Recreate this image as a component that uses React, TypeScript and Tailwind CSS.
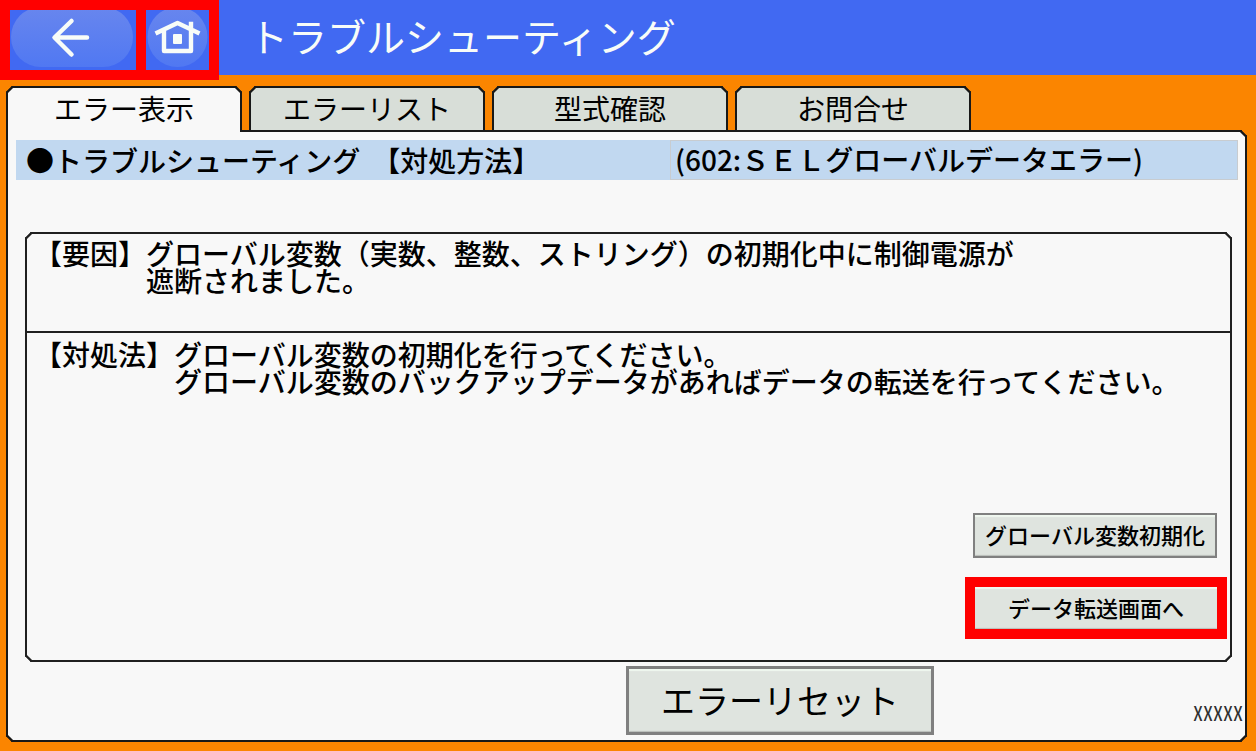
import React from 'react';
import clsx from 'clsx';

interface Tab {
  id: string;
  label: string;
}

const tabs: Tab[] = [
  { id: 'error', label: 'エラー表示' },
  { id: 'list', label: 'エラーリスト' },
  { id: 'model', label: '型式確認' },
  { id: 'contact', label: 'お問合せ' },
];

const Header: React.FC = () => (
  <header className="flex h-[75px] items-start bg-[#4169f2] text-[#f8fcf8]">
    <div className="z-10 flex h-20 shrink-0 bg-[#4169f2]">
      <button type="button" aria-label="戻る" className="w-[146px] border-10 border-[#ff0000]">
        <svg viewBox="0 0 126 60" className="block h-full w-full" fill="none">
          <defs>
            <linearGradient id="shine" x1="0" y1="0" x2="0" y2="1">
              <stop offset="0" stopColor="#6886ee" />
              <stop offset="1" stopColor="#5078f2" />
            </linearGradient>
          </defs>
          <rect x="1" y="-3" width="122" height="60" rx="30" fill="url(#shine)" />
          <path
            d="M77 27.5H45M61.5 11L44.5 27.5L61.5 44.5"
            stroke="currentColor"
            strokeWidth="4.5"
            strokeLinecap="round"
            strokeLinejoin="round"
          />
        </svg>
      </button>
      <button type="button" aria-label="ホーム" className="-ml-2.5 w-[83px] border-10 border-[#ff0000]">
        <svg viewBox="0 0 63 60" className="block h-full w-full" fill="none">
          <circle cx="31.5" cy="27" r="30" fill="url(#shine)" />
          <path
            d="M11.5 22.5L31.5 13L51.5 22.5M45 14V19M18 22V41H45V22"
            stroke="currentColor"
            strokeWidth="4.4"
            strokeLinecap="square"
            strokeLinejoin="round"
          />
          <rect x="27" y="24" width="9" height="10" rx="1" fill="currentColor" />
        </svg>
      </button>
    </div>
    <h1 className="ml-[30px] text-[39px] leading-[70px] whitespace-nowrap">トラブルシューティング</h1>
  </header>
);

interface PanelButtonProps {
  children: React.ReactNode;
  className?: string;
}

const PanelButton: React.FC<PanelButtonProps> = ({ children, className }) => (
  <button
    type="button"
    className={clsx(
      'border-[#808080] bg-[#dfe4df] pb-0.5 text-black shadow-[inset_0_2px_1px_#f0f8f0,inset_0_-1px_1px_#b8bcb8]',
      className
    )}
  >
    {children}
  </button>
);

const App: React.FC = () => {
  const [active, setActive] = React.useState('error');

  return (
    <div
      lang="ja"
      className="flex min-h-screen flex-col bg-[#fb8500] font-['Noto_Sans_CJK_JP',sans-serif] text-black"
    >
      <Header />

      <main className="flex flex-1 flex-col pt-[11px] pr-[9px] pb-[9px] pl-1.5">
        <div role="tablist" className="flex gap-[7px]">
          {tabs.map((tab) => (
            <button
              key={tab.id}
              type="button"
              role="tab"
              aria-selected={tab.id === active}
              onClick={() => setActive(tab.id)}
              className={clsx(
                'h-[46px] w-[236px] rounded-t-[6px] border-2 border-[#181818] text-[28px] leading-10 [corner-shape:bevel]',
                tab.id === active ? 'z-10 border-b-0 bg-[#f8f8f8] pb-1.5' : 'bg-[#d8ded8] pb-1'
              )}
            >
              {tab.label}
            </button>
          ))}
        </div>

        <section className="-mt-0.5 flex flex-1 flex-col rounded-md rounded-tl-none border-2 border-[#181818] bg-[#f8f8f8] pt-2 [corner-shape:bevel]">
          <div className="mr-[7px] ml-2 flex h-10 items-center bg-[#c1d8f0] text-[28px] leading-9 font-medium whitespace-nowrap">
            <h2 className="flex flex-1 gap-3 pl-2.5">
              <span>●トラブルシューティング</span>
              <span>【対処方法】</span>
            </h2>
            <p className="h-10 w-[568px] border border-[#c8ccd0] pl-1">(602:ＳＥＬグローバルデータエラー)</p>
          </div>

          <div className="mt-[52px] mr-[13px] ml-[17px] flex flex-1 flex-col rounded-md border-2 border-[#202020] text-[28px] leading-[27px] font-medium [corner-shape:bevel]">
            <div className="flex h-[99px] border-b-2 border-[#202020] pt-1.5 pl-[7px]">
              <h3 className="shrink-0">【要因】</h3>
              <p>
                グローバル変数（実数、整数、ストリング）の初期化中に制御電源が
                <br />
                遮断されました。
              </p>
            </div>
            <div className="flex pt-2 pl-[7px]">
              <h3 className="shrink-0">【対処法】</h3>
              <p>
                グローバル変数の初期化を行ってください。
                <br />
                グローバル変数のバックアップデータがあればデータの転送を行ってください。
              </p>
            </div>
            <div className="mt-auto mr-[3px] mb-[21px] flex flex-col items-end gap-[19px]">
              <PanelButton className="mr-2.5 h-[45px] w-[244px] border-2 text-[22px]">グローバル変数初期化</PanelButton>
              <div className="bg-[#ff0000] p-2.5">
                <PanelButton className="block h-[42px] w-[242px] text-[22px]">データ転送画面へ</PanelButton>
              </div>
            </div>
          </div>

          <footer className="grid grid-cols-[1fr_auto_1fr] items-center pt-1 pb-[5px]">
            <PanelButton className="col-start-2 ml-[307px] h-[69px] w-[308px] border-[3px] text-[34px]">
              エラーリセット
            </PanelButton>
            <span className="pt-6 pr-0.5 text-right text-xl text-[#303030] [font-feature-settings:'hwid']">XXXXX</span>
          </footer>
        </section>
      </main>
    </div>
  );
};

export default App;
